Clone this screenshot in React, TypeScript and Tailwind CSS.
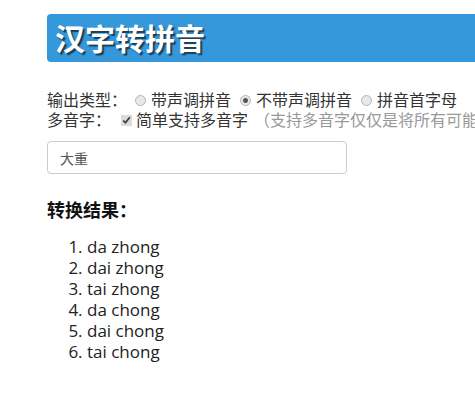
import { useState } from 'react'

const results = ['da zhong', 'dai zhong', 'tai zhong', 'da chong', 'dai chong', 'tai chong']

const radioCls =
  'appearance-none w-[11px] h-[11px] mr-[5px] rounded-full border border-[#b5b5b5] bg-[#e8e8e8] checked:bg-[radial-gradient(circle,#555_0_2px,#e8e8e8_3px)]'

export default function App() {
  const [mode, setMode] = useState('none')
  const [multi, setMulti] = useState(true)
  const [text, setText] = useState('大重')

  return (
    <div
      className="w-full h-[394px] overflow-hidden bg-white text-[#333] pl-[47px] pt-[14px]"
      style={{ fontFamily: '"Segoe UI", "Open Sans", "Noto Sans CJK SC", sans-serif' }}
    >
      <div className="w-[700px]">
        <h1 className="h-[48px] flex items-center pl-[8px] rounded-[4px] bg-[#3498db] text-white text-[30px] font-bold [text-shadow:2px_2px_1px_#1d3e57]">
          汉字转拼音
        </h1>

        <div className="mt-[28px] text-[16px] leading-[20px] whitespace-nowrap">
          <div className="flex items-center">
            <span>输出类型：</span>
            <label className="ml-[8px] flex items-center">
              <input
                type="radio"
                name="mode"
                className={radioCls}
                checked={mode === 'tone'}
                onChange={() => setMode('tone')}
              />
              带声调拼音
            </label>
            <label className="ml-[9px] flex items-center">
              <input
                type="radio"
                name="mode"
                className={radioCls}
                checked={mode === 'none'}
                onChange={() => setMode('none')}
              />
              不带声调拼音
            </label>
            <label className="ml-[9px] flex items-center">
              <input
                type="radio"
                name="mode"
                className={radioCls}
                checked={mode === 'first'}
                onChange={() => setMode('first')}
              />
              拼音首字母
            </label>
          </div>
          <div className="flex items-center">
            <span>多音字：</span>
            <label className="ml-[10px] flex items-center">
              <input
                type="checkbox"
                className="w-[11px] h-[11px] mr-[4px] accent-[#dcdcdc]"
                checked={multi}
                onChange={(e) => setMulti(e.target.checked)}
              />
              简单支持多音字
            </label>
            <span className="ml-[6px] text-[#999]">（支持多音字仅仅是将所有可能的组合列出来）</span>
          </div>
        </div>

        <input
          value={text}
          onChange={(e) => setText(e.target.value)}
          className="mt-[11px] block w-[300px] h-[33px] px-[12px] text-[14px] text-[#555] border border-[#ccc] rounded-[4px] outline-none"
        />

        <h2 className="mt-[24px] text-[18px] leading-[25px] font-bold text-[#111]">转换结果：</h2>

        <ol className="mt-[13px] list-decimal pl-[40px] text-[17px] leading-[21px] text-[#222]">
          {results.map((r) => (
            <li key={r}>{r}</li>
          ))}
        </ol>
      </div>
    </div>
  )
}
